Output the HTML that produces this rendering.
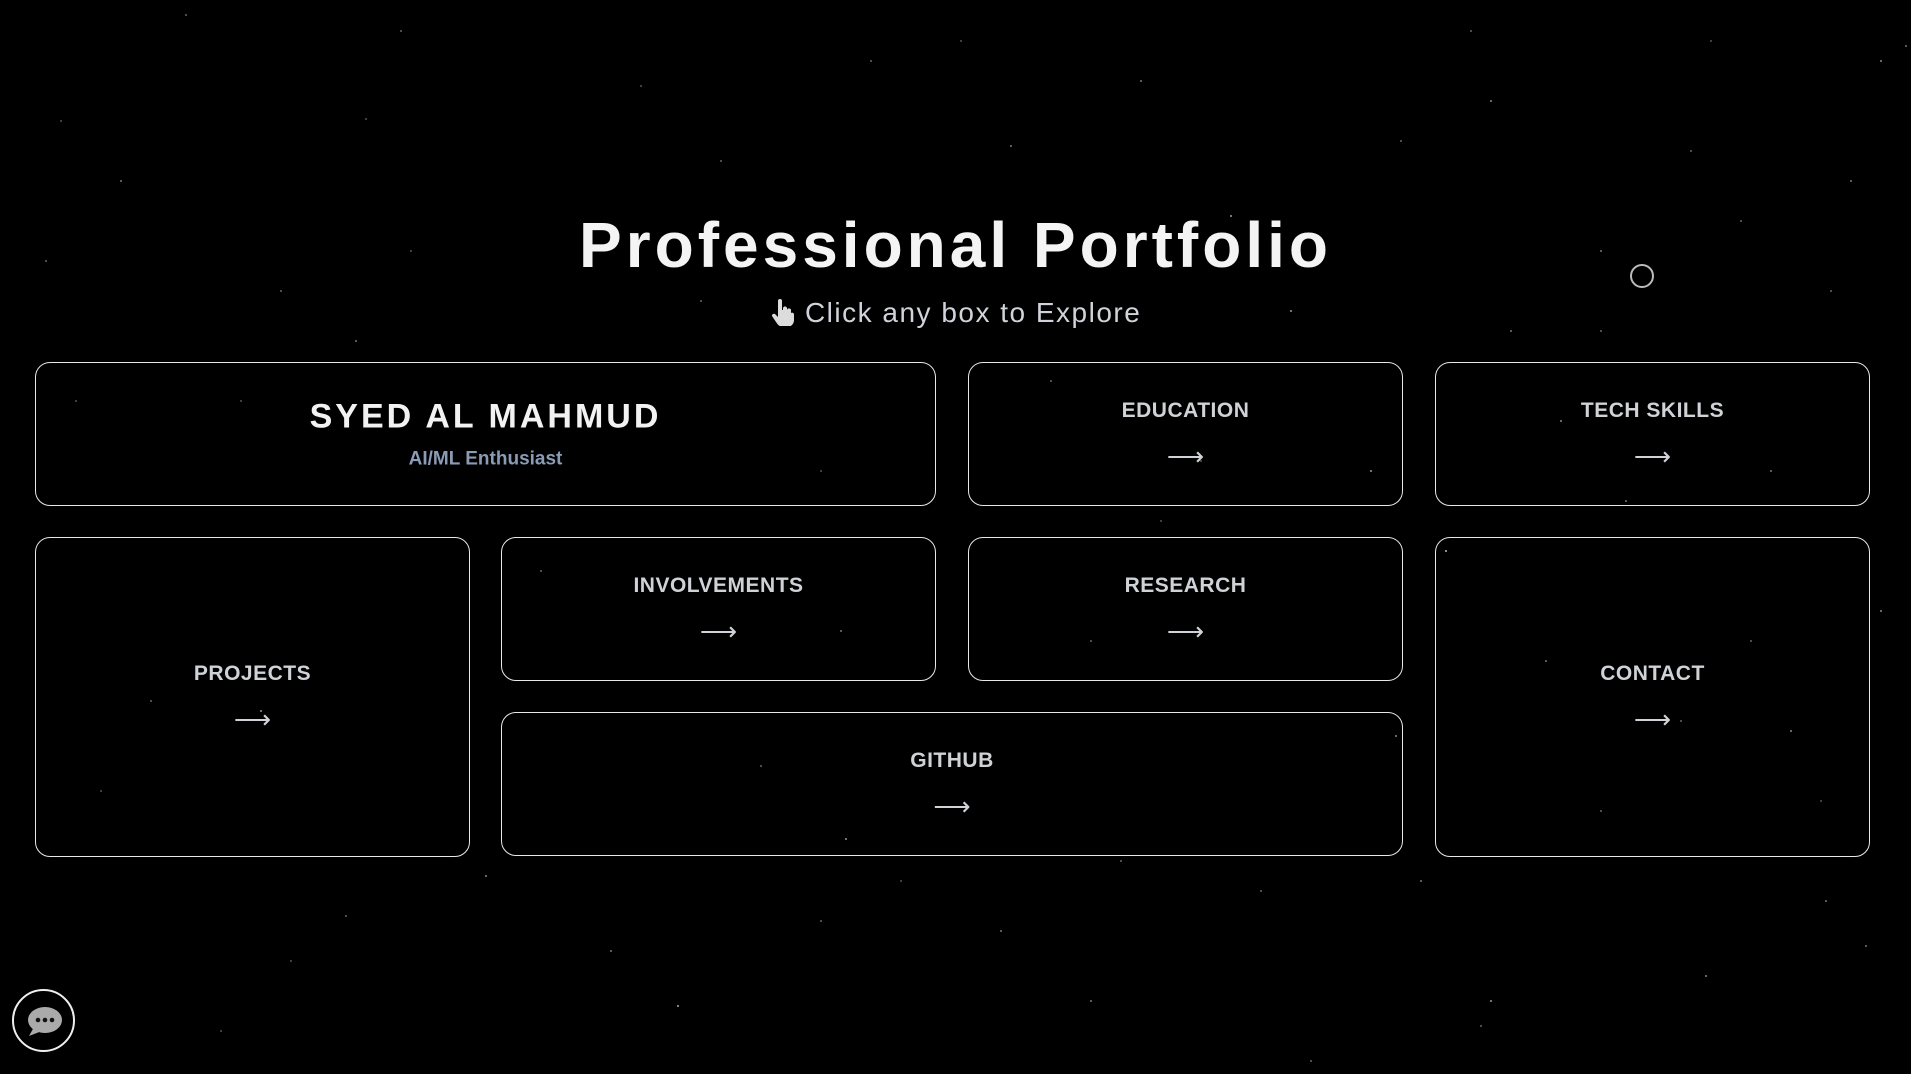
<!DOCTYPE html>
<html><head><meta charset="utf-8"><style>
html,body{margin:0;padding:0;width:1911px;height:1074px;background:#000;overflow:hidden;font-family:"Liberation Sans",sans-serif;}
.stars{position:absolute;left:0;top:0;width:2px;height:2px;border-radius:50%;background:transparent;
box-shadow:185px 14px #666,365px 118px #555,120px 180px #777,640px 85px #555,870px 60px #666,1140px 80px #777,1230px 215px #999,1490px 100px #888,1690px 150px #666,1850px 180px #777,1880px 60px #888,1905px 45px #777,1830px 290px #666,1600px 250px #777,1400px 140px #666,1290px 310px #999,960px 40px #555,720px 160px #666,410px 250px #555,280px 290px #666,355px 340px #777,60px 120px #555,240px 400px #555,700px 300px #666,1510px 330px #777,1740px 220px #666,1560px 420px #888,1625px 500px #777,1370px 470px #999,1200px 460px #555,1050px 380px #666,820px 470px #555,840px 630px #777,540px 570px #666,760px 765px #666,845px 838px #999,1120px 860px #666,1395px 735px #888,1545px 660px #777,1680px 720px #666,1790px 730px #888,1865px 945px #777,1705px 975px #888,1490px 1000px #999,1310px 1060px #666,1090px 1000px #777,900px 880px #555,677px 1005px #aaa,485px 875px #888,345px 915px #666,290px 960px #555,220px 1030px #555,100px 790px #555,150px 700px #666,260px 710px #999,820px 920px #666,1000px 930px #777,1260px 890px #666,1420px 880px #777,1600px 810px #666,1820px 800px #555,1880px 610px #888,1750px 640px #666,1445px 550px #bbb,610px 950px #777,1480px 1025px #666,75px 400px #555,45px 260px #666,400px 30px #666,1010px 145px #777,1300px 240px #aaa,1470px 30px #666,1710px 40px #555,1600px 330px #666,970px 260px #555,1770px 470px #777,1825px 900px #777,1090px 640px #666,1160px 520px #555;}
.title{position:absolute;left:0;width:1911px;top:205px;text-align:center;color:#f4f4f4;font-weight:bold;font-size:64px;letter-spacing:4px;line-height:80px;}
.sub{position:absolute;left:0;width:1911px;top:297px;text-align:center;color:#d0d4da;font-size:28px;letter-spacing:1.5px;}
.box{position:absolute;border:1.5px solid #e8e8e8;border-radius:15px;box-sizing:border-box;color:#cfd2d6;text-align:center;}
.box .in{position:absolute;left:0;right:0;top:50%;transform:translateY(-50%);}
.lab{font-weight:bold;font-size:21px;letter-spacing:0.5px;}
.arr{font-size:26px;margin-top:20px;line-height:26px;}
.circ{position:absolute;left:1630px;top:264px;width:20px;height:20px;border:2px solid #bbb;border-radius:50%;}
.chat{position:absolute;left:12px;top:989px;width:63px;height:63px;border:2px solid #eee;border-radius:50%;box-sizing:border-box;}
</style></head><body>
<div class="stars"></div>
<div class="title">Professional Portfolio</div>
<div class="sub"><svg width="26" height="28" viewBox="0 0 26 28" style="vertical-align:-4px"><path d="M8 3a2 2 0 0 1 4 0v9h1v-2a2 2 0 0 1 4 1v1a2 2 0 0 1 4 1v2a2 2 0 0 1 3 1v6c0 4-3 7-7 7h-4c-3 0-5-2-7-5l-4-6a2 2 0 0 1 3-2l3 3z" fill="#dcdcdc"/></svg> Click any box to Explore</div>
<div class="circ"></div>
<div class="box" style="left:35px;top:362px;width:901px;height:144px"><div class="in"><div style="color:#f2f2f2;font-weight:bold;font-size:34px;letter-spacing:3px">SYED AL MAHMUD</div><div style="color:#8a9bb5;font-size:19px;margin-top:12px;font-weight:bold">AI/ML Enthusiast</div></div></div>
<div class="box" style="left:968px;top:362px;width:435px;height:144px"><div class="in"><div class="lab">EDUCATION</div><div class="arr">⟶</div></div></div>
<div class="box" style="left:1435px;top:362px;width:435px;height:144px"><div class="in"><div class="lab">TECH SKILLS</div><div class="arr">⟶</div></div></div>
<div class="box" style="left:35px;top:537px;width:435px;height:320px"><div class="in"><div class="lab">PROJECTS</div><div class="arr">⟶</div></div></div>
<div class="box" style="left:501px;top:537px;width:435px;height:144px"><div class="in"><div class="lab">INVOLVEMENTS</div><div class="arr">⟶</div></div></div>
<div class="box" style="left:968px;top:537px;width:435px;height:144px"><div class="in"><div class="lab">RESEARCH</div><div class="arr">⟶</div></div></div>
<div class="box" style="left:1435px;top:537px;width:435px;height:320px"><div class="in"><div class="lab">CONTACT</div><div class="arr">⟶</div></div></div>
<div class="box" style="left:501px;top:712px;width:902px;height:144px"><div class="in"><div class="lab">GITHUB</div><div class="arr">⟶</div></div></div>
<div class="chat"><svg width="59" height="59" viewBox="0 0 59 59"><ellipse cx="31" cy="29" rx="17" ry="13" fill="#aaa"/><path d="M20 36 L15 45 L28 40 Z" fill="#aaa"/><circle cx="24" cy="29" r="2.3" fill="#111"/><circle cx="31" cy="29" r="2.3" fill="#111"/><circle cx="38" cy="29" r="2.3" fill="#111"/></svg></div>
</body></html>
